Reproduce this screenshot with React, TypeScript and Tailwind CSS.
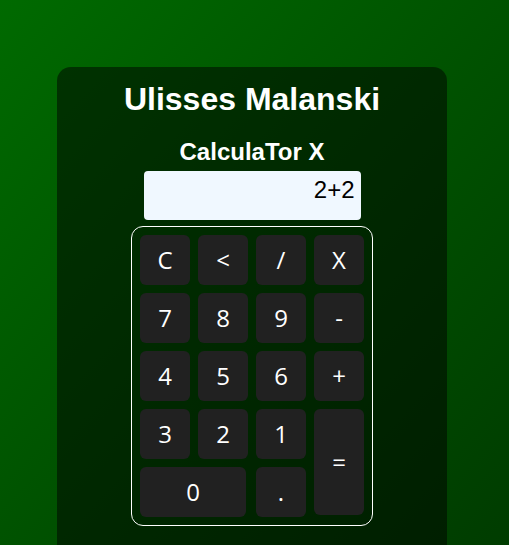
export default function App() {
  const keys: { label: string; cls?: string }[] = [
    { label: "C" },
    { label: "<" },
    { label: "/" },
    { label: "X" },
    { label: "7" },
    { label: "8" },
    { label: "9" },
    { label: "-" },
    { label: "4" },
    { label: "5" },
    { label: "6" },
    { label: "+" },
    { label: "3" },
    { label: "2" },
    { label: "1" },
    { label: "=", cls: "row-span-2 h-[106px]" },
    { label: "0", cls: "col-span-2 w-[106px]" },
    { label: "." },
  ];

  return (
    <div className="h-screen overflow-hidden bg-linear-to-br from-[#006a00] to-[#003c00] pr-[5px] pt-[67px]">
      <div className="mx-auto flex h-[520px] w-[390px] flex-col items-center rounded-[14px] bg-black/50 pt-[14px] font-['Liberation_Sans',Arial,sans-serif] text-white">
        <h1 className="text-[32px] leading-[37px] font-bold">Ulisses Malanski</h1>
        <h2 className="mt-[20px] text-[24px] leading-[28px] font-bold">CalculaTor X</h2>
        <div className="mt-[5px] flex h-[49px] w-[217px] justify-end rounded-[4px] bg-[#f0f8ff] px-[6px] pt-[5px] text-[24px] leading-[28px] text-black">
          2+2
        </div>
        <div className="mt-[6px] grid grid-cols-[repeat(4,50px)] grid-rows-[repeat(5,50px)] gap-2 rounded-[12px] border border-white p-2 font-['Open_Sans',sans-serif]">
          {keys.map((k) => (
            <button
              key={k.label}
              type="button"
              className={`flex h-[50px] w-[50px] items-center justify-center rounded-[6px] bg-[#212121] text-[24px] text-white ${k.cls ?? ""}`}
            >
              {k.label}
            </button>
          ))}
        </div>
      </div>
    </div>
  );
}
